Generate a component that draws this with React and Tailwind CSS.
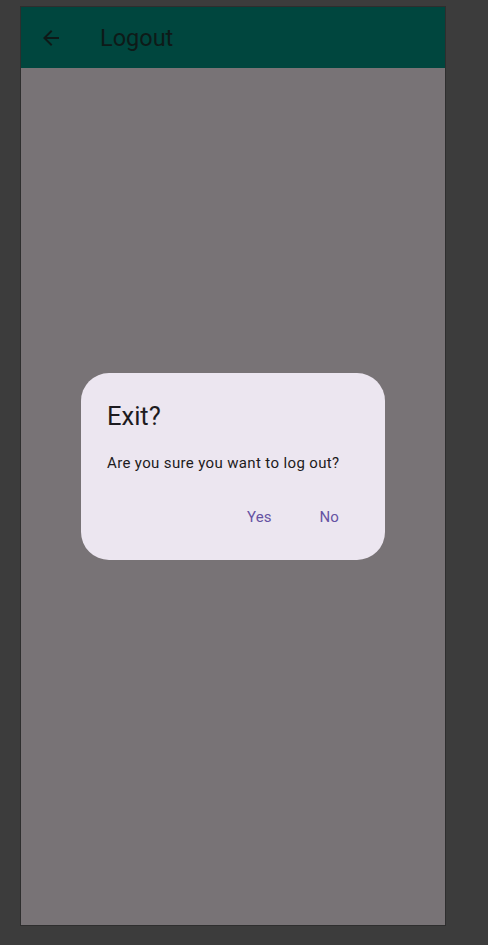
export default function App() {
  return (
    <div className="w-[488px] h-[945px] bg-[#3c3c3c] pt-[6px] pl-[20px]" style={{ fontFamily: "Roboto, 'Noto Sans', sans-serif" }}>
      <div className="relative w-[426px] h-[920px] border border-[#2e2e2e] bg-[#787376] flex flex-col">
        <div className="h-[61px] bg-[#00463e] flex items-center shrink-0">
          <div className="w-[24px] h-[24px] ml-[18px]">
            <svg viewBox="0 0 24 24" width="24" height="24" fill="#0e1a18">
              <path d="M20 11H7.83l5.59-5.59L12 4l-8 8 8 8 1.41-1.41L7.83 13H20v-2z" />
            </svg>
          </div>
          <div className="ml-[37px] text-[23.5px] leading-[28px] text-[#0e1a18]">Logout</div>
        </div>
        <div className="flex-1" />
        <div className="absolute inset-0 flex items-center justify-center">
          <div className="w-[304px] h-[187px] rounded-[28px] bg-[#ece6f0] pt-[27px] px-[24px] flex flex-col">
            <div className="text-[25.5px] leading-[32px] text-[#1d1b20] pl-[2px]">Exit?</div>
            <div className="mt-[21px] text-[15px] leading-[20px] tracking-[0.36px] text-[#1d1b20] pl-[2px]">Are you sure you want to log out?</div>
            <div className="mt-[24px] pr-[10px] flex justify-end gap-[24px] text-[15px] leading-[20px] tracking-[0.1px] text-[#6653a3]">
              <div className="h-[40px] px-[12px] flex items-center">Yes</div>
              <div className="h-[40px] px-[12px] flex items-center">No</div>
            </div>
          </div>
        </div>
      </div>
    </div>
  );
}
